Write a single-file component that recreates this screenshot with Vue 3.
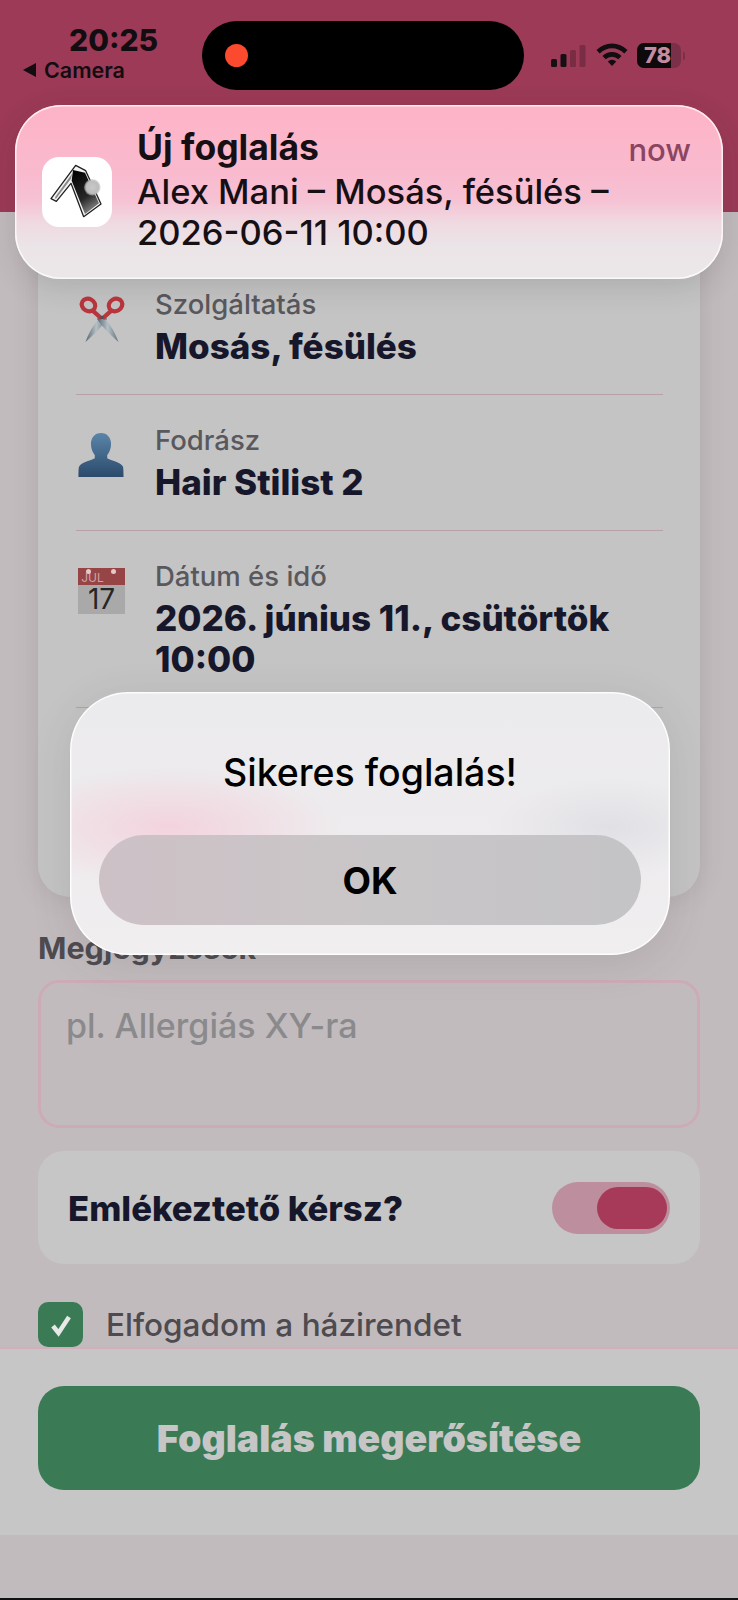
<template>
  <div class="page">
    <header class="top">
      <div class="status">
        <div class="status-left">
          <div class="time">20:25</div>
          <div class="back"><span class="back-arrow"></span>Camera</div>
        </div>
        <div class="island"><span class="rec-dot"></span></div>
        <div class="status-right">
          <svg class="signal" width="36" height="24" viewBox="0 0 36 24">
            <rect x="0" y="15" width="6" height="8" rx="1.5" fill="#161014" />
            <rect x="9.500" y="10" width="6" height="13" rx="1.5" fill="#161014" />
            <rect x="19" y="6" width="6" height="17" rx="1.5" fill="#7a2c44" />
            <rect x="28.500" y="1" width="6" height="22" rx="1.5" fill="#7a2c44" />
          </svg>
          <svg class="wifi" width="32" height="24" viewBox="0 0 32 24">
            <path d="M.500 8a22 22 0 0 1 31 0l-3.200 3.400a17.500 17.500 0 0 0-24.600 0z" fill="#120d10" />
            <path d="M6.500 14a13.500 13.500 0 0 1 19 0l-3.200 3.300a9 9 0 0 0-12.600 0z" fill="#120d10" />
            <path d="M11.800 19.500a6 6 0 0 1 8.400 0L16 24z" fill="#120d10" />
          </svg>
          <div class="battery">
            <div class="battery-body"><span class="battery-fill"></span><span class="battery-num">78</span></div>
            <span class="battery-cap"></span>
          </div>
        </div>
      </div>
    </header>

    <main class="content">
      <section class="card">
        <div class="row" v-for="row in rows" :key="row.label">
          <div class="row-icon">
            <svg v-if="row.icon === 'scissors'" width="48" height="48" viewBox="0 0 48 48">
              <defs>
                <linearGradient id="blade" x1="0" y1="0" x2="1" y2="0">
                  <stop offset="0" stop-color="#56666f" />
                  <stop offset="0.5" stop-color="#b4c0c6" />
                  <stop offset="1" stop-color="#66757d" />
                </linearGradient>
              </defs>
              <path d="M26 19C18 24 12 34 7.500 46 14 40 23 32 29 23z" fill="url(#blade)" />
              <path d="M22 19C30 24 36 34 40.500 46 34 40 25 32 19 23z" fill="url(#blade)" />
              <ellipse cx="10.500" cy="9" rx="7" ry="6" transform="rotate(30 10.500 9)" fill="none" stroke="#b9363e" stroke-width="4.200" />
              <ellipse cx="37.500" cy="9" rx="7" ry="6" transform="rotate(-30 37.500 9)" fill="none" stroke="#b9363e" stroke-width="4.200" />
              <path d="M16 13 L25 21 L22 24 L13 16z" fill="#b9363e" />
              <path d="M32 13 L23 21 L26 24 L35 16z" fill="#b9363e" />
              <circle cx="24" cy="21.500" r="1.800" fill="#4b5358" />
            </svg>
            <svg v-else-if="row.icon === 'person'" width="46" height="46" viewBox="0 0 48 48">
              <defs>
                <linearGradient id="bust" x1="0" y1="0" x2="0" y2="1">
                  <stop offset="0" stop-color="#5a85a8" />
                  <stop offset="1" stop-color="#2b4a6c" />
                </linearGradient>
              </defs>
              <path d="M24 1c6.500 0 10.500 5 10.500 11.500 0 5-2 9-4 11.500v3.500c3 2.500 13 3.500 16 8 .8 1.200 1 3 1 11.500H.500c0-8.500.2-10.300 1-11.500 3-4.500 13-5.500 16-8V24c-2-2.500-4-6.500-4-11.500C13.500 6 17.500 1 24 1z" fill="url(#bust)" />
            </svg>
            <div v-else class="calendar">
              <span class="cal-pin cal-pin-left"></span>
              <span class="cal-pin cal-pin-right"></span>
              <div class="cal-top">JUL</div>
              <div class="cal-day">17</div>
            </div>
          </div>
          <div class="row-text">
            <div class="row-label">{{ row.label }}</div>
            <div class="row-value">{{ row.value }}</div>
          </div>
        </div>
      </section>

      <div class="note-label">Megjegyzések</div>
      <div class="note-input">pl. Allergiás XY-ra</div>

      <div class="reminder">
        <span class="reminder-text">Emlékeztető kérsz?</span>
        <div class="toggle"><span class="toggle-knob"></span></div>
      </div>

      <div class="accept">
        <span class="checkbox">
          <svg width="26" height="26" viewBox="0 0 26 26">
            <path d="M5 14l5.500 7L21 5" fill="none" stroke="#e8e8e8" stroke-width="4.500" />
          </svg>
        </span>
        <span class="accept-text">Elfogadom a házirendet</span>
      </div>
    </main>

    <footer class="footer">
      <div class="confirm">Foglalás megerősítése</div>
    </footer>
    <div class="footer-rest"></div>

    <aside class="notice">
      <div class="notice-icon">
        <svg width="70" height="70" viewBox="21 21 210 210">
          <defs>
            <linearGradient id="logo" x1="0.3" y1="0" x2="0.7" y2="1">
              <stop offset="0" stop-color="#050505" />
              <stop offset="0.6" stop-color="#262626" />
              <stop offset="1" stop-color="#8f8f8f" />
            </linearGradient>
            <radialGradient id="ball">
              <stop offset="0" stop-color="#c9c9c9" />
              <stop offset="0.75" stop-color="#bcbcbc" />
              <stop offset="1" stop-color="#bcbcbc" stop-opacity="0.4" />
            </radialGradient>
          </defs>
          <path d="M48 146 L122 46 L152 62 L198 162 L146 200 L108 100 L64 154z" fill="#f4f4f4" stroke="#222" stroke-width="4" stroke-linejoin="round" />
          <path d="M114 60 L150 68 L192 160 L150 192 L110 92z" fill="url(#logo)" />
          <path d="M60 142 L112 70 L108 86 L62 148z" fill="#8a8a8a" />
          <circle cx="172" cy="112" r="25" fill="url(#ball)" />
        </svg>
      </div>
      <div class="notice-text">
        <div class="notice-title">Új foglalás</div>
        <div class="notice-body">Alex Mani – Mosás, fésülés – 2026-06-11 10:00</div>
      </div>
      <span class="notice-time">now</span>
    </aside>

    <aside class="modal">
      <div class="modal-title">Sikeres foglalás!</div>
      <div class="modal-btn">OK</div>
    </aside>

    <div class="bottom-line"></div>
  </div>
</template>

<script setup>
const rows = [
  { icon: 'scissors', label: 'Szolgáltatás', value: 'Mosás, fésülés' },
  { icon: 'person', label: 'Fodrász', value: 'Hair Stilist 2' },
  { icon: 'calendar', label: 'Dátum és idő', value: '2026. június 11., csütörtök 10:00' }
]
</script>

<style>
html,
body {
  margin: 0;
  background: #c2bbbe;
}
</style>

<style scoped>
.page {
  position: relative;
  width: 738px;
  height: 1600px;
  overflow: hidden;
  background: #c2bbbe;
  display: flex;
  flex-direction: column;
  font-family: Inter, "Noto Sans", sans-serif;
  color: #17172b;
}

/* status bar */
.top {
  height: 212px;
  flex: none;
  background: #9c3a57;
}

.status {
  display: flex;
  align-items: flex-start;
  padding: 21px 0 0 23px;
}

.status-left {
  width: 179px;
  color: #120d10;
}

.time {
  font-size: 30px;
  font-weight: 800;
  line-height: 38px;
  padding-left: 46px;
}

.back {
  display: flex;
  align-items: center;
  gap: 8px;
  font-size: 21.500px;
  font-weight: 600;
  line-height: 22px;
}

.back-arrow {
  width: 0;
  height: 0;
  border-top: 7px solid transparent;
  border-bottom: 7px solid transparent;
  border-right: 13px solid #120d10;
}

.island {
  width: 322px;
  height: 69px;
  border-radius: 35px;
  background: #000;
  display: flex;
  align-items: center;
  padding-left: 23px;
  box-sizing: border-box;
}

.rec-dot {
  width: 23px;
  height: 23px;
  border-radius: 50%;
  background: #fb4a2e;
}

.status-right {
  display: flex;
  align-items: center;
  gap: 9px;
  margin-left: 27px;
  height: 69px;
}

.wifi {
  margin-top: -3px;
}

.battery {
  display: flex;
  align-items: center;
}

.battery-body {
  position: relative;
  width: 44px;
  height: 25px;
  border-radius: 7px;
  background: #7a3049;
  overflow: hidden;
}

.battery-fill {
  display: block;
  width: 34px;
  height: 25px;
  background: #0e0a0c;
}

.battery-num {
  position: absolute;
  left: 7px;
  top: 0;
  font-size: 22px;
  font-weight: 800;
  line-height: 25px;
  color: #c58ba0;
}

.battery-cap {
  width: 2px;
  height: 8px;
  margin-left: 2px;
  border-radius: 0 2px 2px 0;
  background: #7a3049;
}

/* page content */
.content {
  flex: 1;
  padding: 28px 38px 0;
  display: flex;
  flex-direction: column;
  overflow: hidden;
}

.card {
  height: 657px;
  flex: none;
  box-sizing: border-box;
  padding: 48px 38px 0;
  border-radius: 0 0 32px 32px;
  background: #c4c4c4;
  box-shadow: 0 0 24px rgba(90, 80, 85, 0.18);
}

.row {
  display: flex;
  gap: 29px;
  padding-bottom: 28px;
  margin-bottom: 29px;
  border-bottom: 1px solid #b8a0a8;
  width: 587px;
}

.row-icon {
  width: 48px;
  flex: none;
  margin-top: 8px;
  margin-left: 2px;
}

.row-label {
  font-size: 27.500px;
  font-weight: 500;
  line-height: 32px;
  color: #59585d;
}

.row-value {
  margin-top: 6px;
  margin-bottom: -1px;
  font-size: 35px;
  font-weight: 800;
  line-height: 41px;
  color: #17172b;
}

.calendar {
  position: relative;
  width: 47px;
  height: 46px;
  background: #a9a9a9;
  text-align: center;
}

.cal-pin {
  position: absolute;
  top: 1px;
  width: 5px;
  height: 5px;
  border-radius: 50%;
  background: #e4c9c9;
}

.cal-pin-left {
  left: 8px;
}

.cal-pin-right {
  right: 9px;
}

.cal-top {
  height: 15px;
  padding-top: 2px;
  padding-right: 18px;
  background: #964445;
  color: #cfa3a3;
  font-size: 12px;
  line-height: 15px;
  overflow: hidden;
}

.cal-day {
  font-size: 28px;
  line-height: 29px;
  color: #262626;
}

.note-label {
  margin-top: 33px;
  flex: none;
  font-size: 30.500px;
  font-weight: 700;
  line-height: 36px;
  color: #4d4b50;
}

.note-input {
  margin-top: 14px;
  height: 148px;
  flex: none;
  box-sizing: border-box;
  padding: 24px 25px;
  border: 3px solid #ccabb6;
  border-radius: 21px;
  font-size: 34px;
  font-weight: 500;
  line-height: 38px;
  color: #8a8a8c;
}

.reminder {
  margin-top: 23px;
  height: 113px;
  flex: none;
  box-sizing: border-box;
  padding: 0 30px;
  border-radius: 26px;
  background: #c6c6c6;
  display: flex;
  align-items: center;
  justify-content: space-between;
}

.reminder-text {
  font-size: 34.700px;
  font-weight: 800;
  color: #17172b;
}

.toggle {
  width: 118px;
  height: 52px;
  box-sizing: border-box;
  padding: 5px 3px;
  border-radius: 26px;
  background: #bd8e9e;
  display: flex;
  justify-content: flex-end;
}

.toggle-knob {
  width: 70px;
  height: 42px;
  border-radius: 21px;
  background: #a63a58;
}

.accept {
  margin-top: 38px;
  display: flex;
  align-items: center;
  gap: 23px;
  flex: none;
}

.checkbox {
  width: 45px;
  height: 45px;
  border-radius: 10px;
  background: #3a7b56;
  display: flex;
  align-items: center;
  justify-content: center;
}

.accept-text {
  font-size: 31.500px;
  font-weight: 500;
  color: #4d4b50;
}

/* footer */
.footer {
  flex: none;
  height: 188px;
  box-sizing: border-box;
  padding: 37px 38px 0;
  border-top: 2px solid #d5aebc;
  background: #c6c6c6;
}

.footer-rest {
  flex: none;
  height: 65px;
}

.confirm {
  height: 104px;
  border-radius: 26px;
  background: #3a7b56;
  display: flex;
  align-items: center;
  justify-content: center;
  font-size: 37.500px;
  font-weight: 900;
  color: #c6c6c6;
}

/* notification over the page */
.notice {
  position: absolute;
  left: 15px;
  top: 105px;
  width: 708px;
  height: 174px;
  box-sizing: border-box;
  padding: 22px 32px 0 27px;
  border-radius: 46px;
  background: linear-gradient(180deg, #feb3c7 0%, #f9bace 40%, #f6c2d4 55%, #efdae2 68%, #ebe5e8 82%, #ebe7e9 100%);
  box-shadow: inset 0 0 0 1.5px rgba(255, 255, 255, 0.75), 0 8px 30px rgba(40, 35, 38, 0.14);
  display: flex;
  align-items: flex-start;
}

.notice-icon {
  width: 70px;
  height: 70px;
  flex: none;
  margin-top: 30px;
  border-radius: 17px;
  background: #fff;
  overflow: hidden;
}

.notice-text {
  flex: 1;
  margin-left: 25px;
  color: #161014;
}

.notice-title {
  font-size: 35.500px;
  font-weight: 700;
  line-height: 41px;
  margin-bottom: 3px;
}

.notice-body {
  width: 490px;
  font-size: 34.500px;
  font-weight: 500;
  line-height: 41px;
}

.notice-time {
  margin-top: 4px;
  font-size: 31px;
  font-weight: 500;
  line-height: 38px;
  color: #8a4562;
}

/* alert */
.modal {
  position: absolute;
  left: 70px;
  top: 692px;
  width: 600px;
  height: 263px;
  box-sizing: border-box;
  padding: 0 29px;
  border-radius: 58px;
  background:
    radial-gradient(ellipse 170px 60px at 100px 135px, rgba(244, 205, 218, 0.8), transparent),
    radial-gradient(ellipse 120px 50px at 540px 135px, rgba(216, 216, 222, 0.6), transparent),
    linear-gradient(180deg, #ebeaec 0%, #eeecee 60%, #f1eef0 100%);
  box-shadow: inset 0 0 0 1.5px rgba(255, 255, 255, 0.9), 0 8px 40px rgba(70, 60, 65, 0.13);
  display: flex;
  flex-direction: column;
}

.modal-title {
  height: 143px;
  flex: none;
  box-sizing: border-box;
  padding-top: 17px;
  display: flex;
  align-items: center;
  justify-content: center;
  font-size: 37.500px;
  font-weight: 500;
  color: #000;
}

.modal-btn {
  height: 90px;
  border-radius: 45px;
  background: linear-gradient(90deg, #cdc1c6 0%, #c9c6c8 50%, #c4c3c6 100%);
  display: flex;
  align-items: center;
  justify-content: center;
  font-size: 37px;
  font-weight: 700;
  color: #000;
}

.bottom-line {
  position: absolute;
  left: 0;
  right: 0;
  bottom: 0;
  height: 2px;
  background: #111;
}
</style>
